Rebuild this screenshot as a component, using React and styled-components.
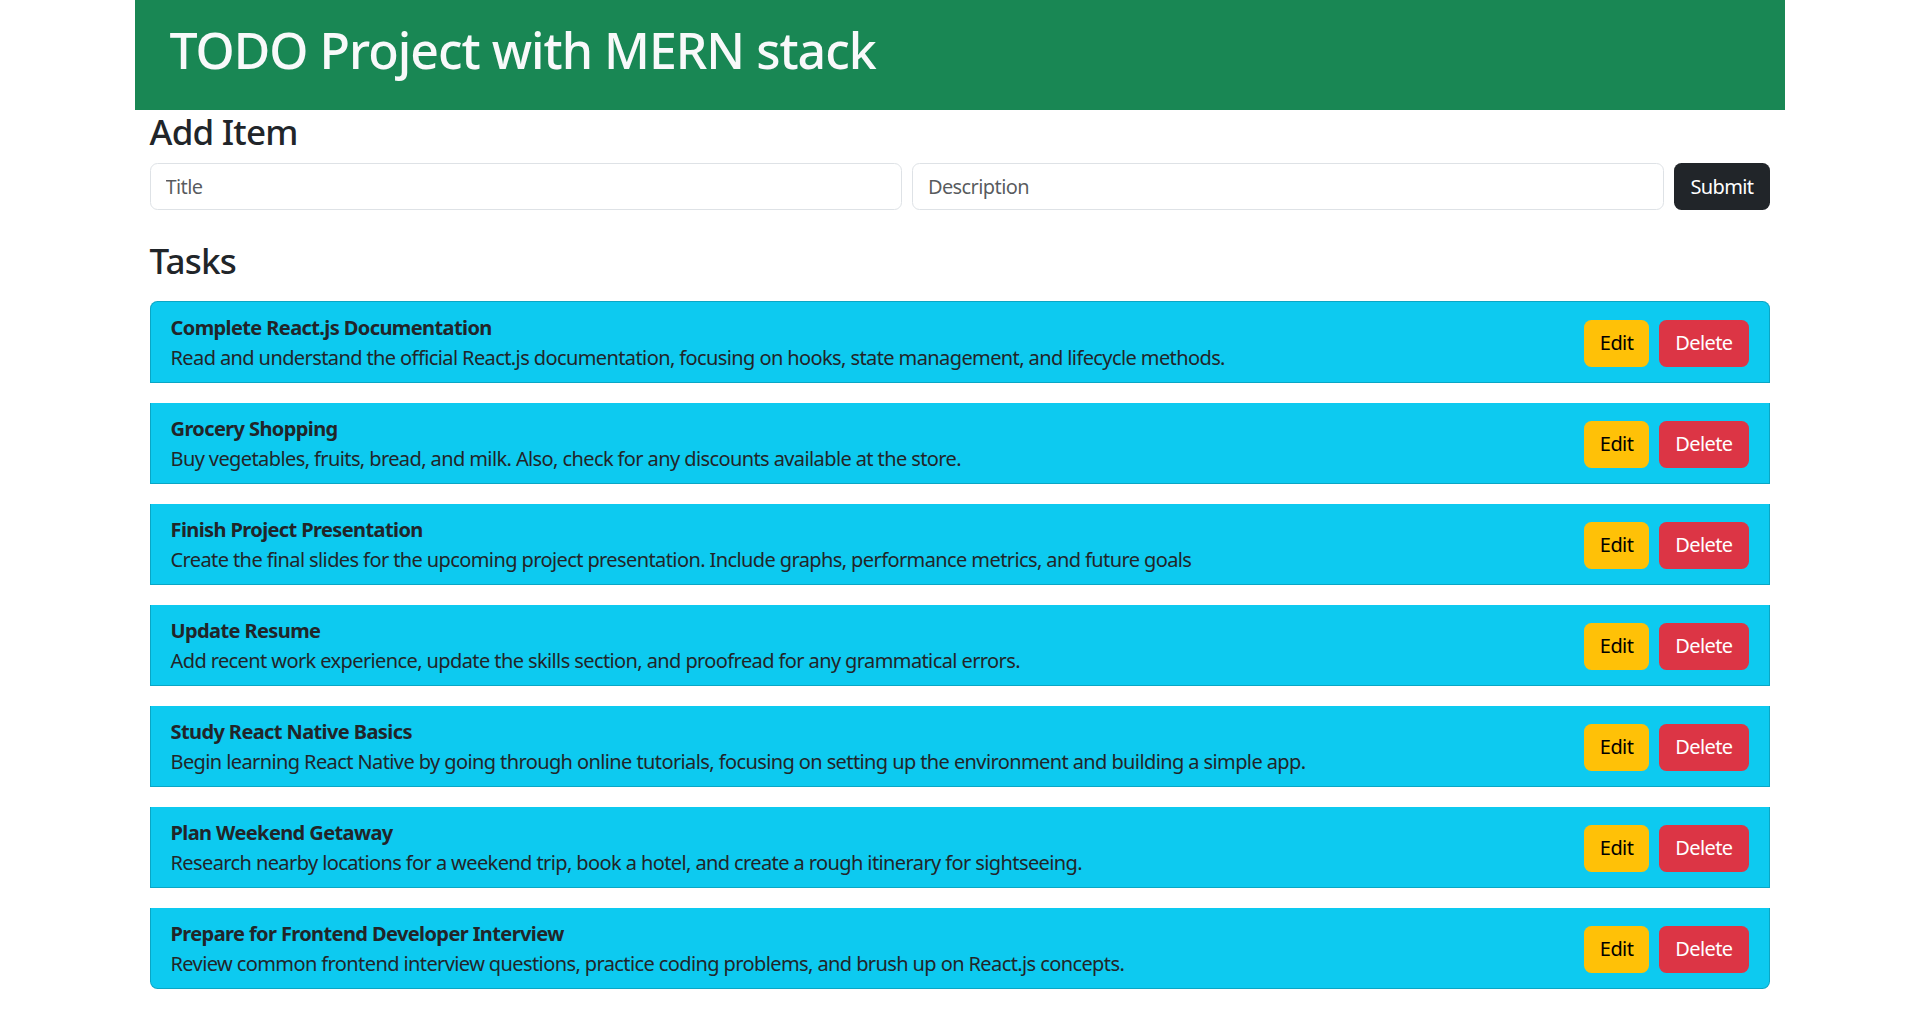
import React from "react";
import styled, { createGlobalStyle } from "styled-components";

const GlobalStyle = createGlobalStyle`
  * { box-sizing: border-box; }
  body {
    margin: 0;
    background: #fff;
    color: #212529;
    font-family: "Noto Sans", "Open Sans", sans-serif;
    font-size: 20px;
    line-height: 1.5;
    letter-spacing: -0.6px;
  }
`;

const Container = styled.div`
  width: 1650px;
  margin: 0 auto;
`;

const Header = styled.header`
  background: #198754;
  padding: 20px 35px 30px;
`;

const Title = styled.h1`
  margin: 0;
  font-size: 50px;
  font-weight: 500;
  line-height: 1.2;
  letter-spacing: -1px;
  color: #f8f9fa;
`;

const Main = styled.main`
  padding: 0 15px;
`;

const SectionHeading = styled.h3`
  margin: ${(p) => p.$top || 0}px 0 ${(p) => p.$bottom || 10}px;
  font-size: 35px;
  font-weight: 500;
  line-height: 1.2;
  letter-spacing: -0.8px;
`;

const Form = styled.form`
  display: flex;
  gap: 10px;
`;

const Input = styled.input`
  flex: 1;
  min-width: 0;
  height: 47px;
  padding: 7.5px 15px;
  font-family: inherit;
  font-size: 20px;
  letter-spacing: -0.6px;
  color: #212529;
  border: 1px solid #dee2e6;
  border-radius: 7.5px;
  outline: none;
  &::placeholder {
    color: rgba(33, 37, 41, 0.75);
  }
`;

const Button = styled.button`
  height: 47px;
  padding: 7.5px 15px;
  font-family: inherit;
  font-size: 20px;
  line-height: 30px;
  letter-spacing: -0.6px;
  border: 1px solid transparent;
  border-radius: 7.5px;
  cursor: pointer;
  background: ${(p) => p.$bg};
  color: ${(p) => p.$fg};
`;

const TaskList = styled.ul`
  list-style: none;
  margin: 0;
  padding: 0;
`;

const TaskItem = styled.li`
  display: flex;
  align-items: center;
  justify-content: space-between;
  margin-bottom: 20px;
  padding: 11px 20px 9px;
  background: #0dcaf0;
  border: 1px solid rgba(0, 0, 0, 0.175);
  & + & {
    border-top-width: 0;
  }
  &:first-child {
    border-top-left-radius: 7.5px;
    border-top-right-radius: 7.5px;
  }
  &:last-child {
    border-bottom-left-radius: 7.5px;
    border-bottom-right-radius: 7.5px;
    margin-bottom: 0;
  }
`;

const TaskText = styled.div`
  line-height: 30px;
`;

const TaskTitle = styled.div`
  font-weight: 700;
`;

const Actions = styled.div`
  display: flex;
  gap: 10px;
`;

const tasks = [
  {
    title: "Complete React.js Documentation",
    desc: "Read and understand the official React.js documentation, focusing on hooks, state management, and lifecycle methods.",
  },
  {
    title: "Grocery Shopping",
    desc: "Buy vegetables, fruits, bread, and milk. Also, check for any discounts available at the store.",
  },
  {
    title: "Finish Project Presentation",
    desc: "Create the final slides for the upcoming project presentation. Include graphs, performance metrics, and future goals",
  },
  {
    title: "Update Resume",
    desc: "Add recent work experience, update the skills section, and proofread for any grammatical errors.",
  },
  {
    title: "Study React Native Basics",
    desc: "Begin learning React Native by going through online tutorials, focusing on setting up the environment and building a simple app.",
  },
  {
    title: "Plan Weekend Getaway",
    desc: "Research nearby locations for a weekend trip, book a hotel, and create a rough itinerary for sightseeing.",
  },
  {
    title: "Prepare for Frontend Developer Interview",
    desc: "Review common frontend interview questions, practice coding problems, and brush up on React.js concepts.",
  },
];

export default function App() {
  return (
    <>
      <GlobalStyle />
      <Container>
        <Header>
          <Title>TODO Project with MERN stack</Title>
        </Header>
        <Main>
          <SectionHeading $top={1} $bottom={10}>Add Item</SectionHeading>
          <Form onSubmit={(e) => e.preventDefault()}>
            <Input placeholder="Title" />
            <Input placeholder="Description" />
            <Button $bg="#212529" $fg="#fff">Submit</Button>
          </Form>
          <SectionHeading $top={30} $bottom={19}>Tasks</SectionHeading>
          <TaskList>
            {tasks.map((t) => (
              <TaskItem key={t.title}>
                <TaskText>
                  <TaskTitle>{t.title}</TaskTitle>
                  <div>{t.desc}</div>
                </TaskText>
                <Actions>
                  <Button $bg="#ffc107" $fg="#000">Edit</Button>
                  <Button $bg="#dc3545" $fg="#fff">Delete</Button>
                </Actions>
              </TaskItem>
            ))}
          </TaskList>
        </Main>
      </Container>
    </>
  );
}
